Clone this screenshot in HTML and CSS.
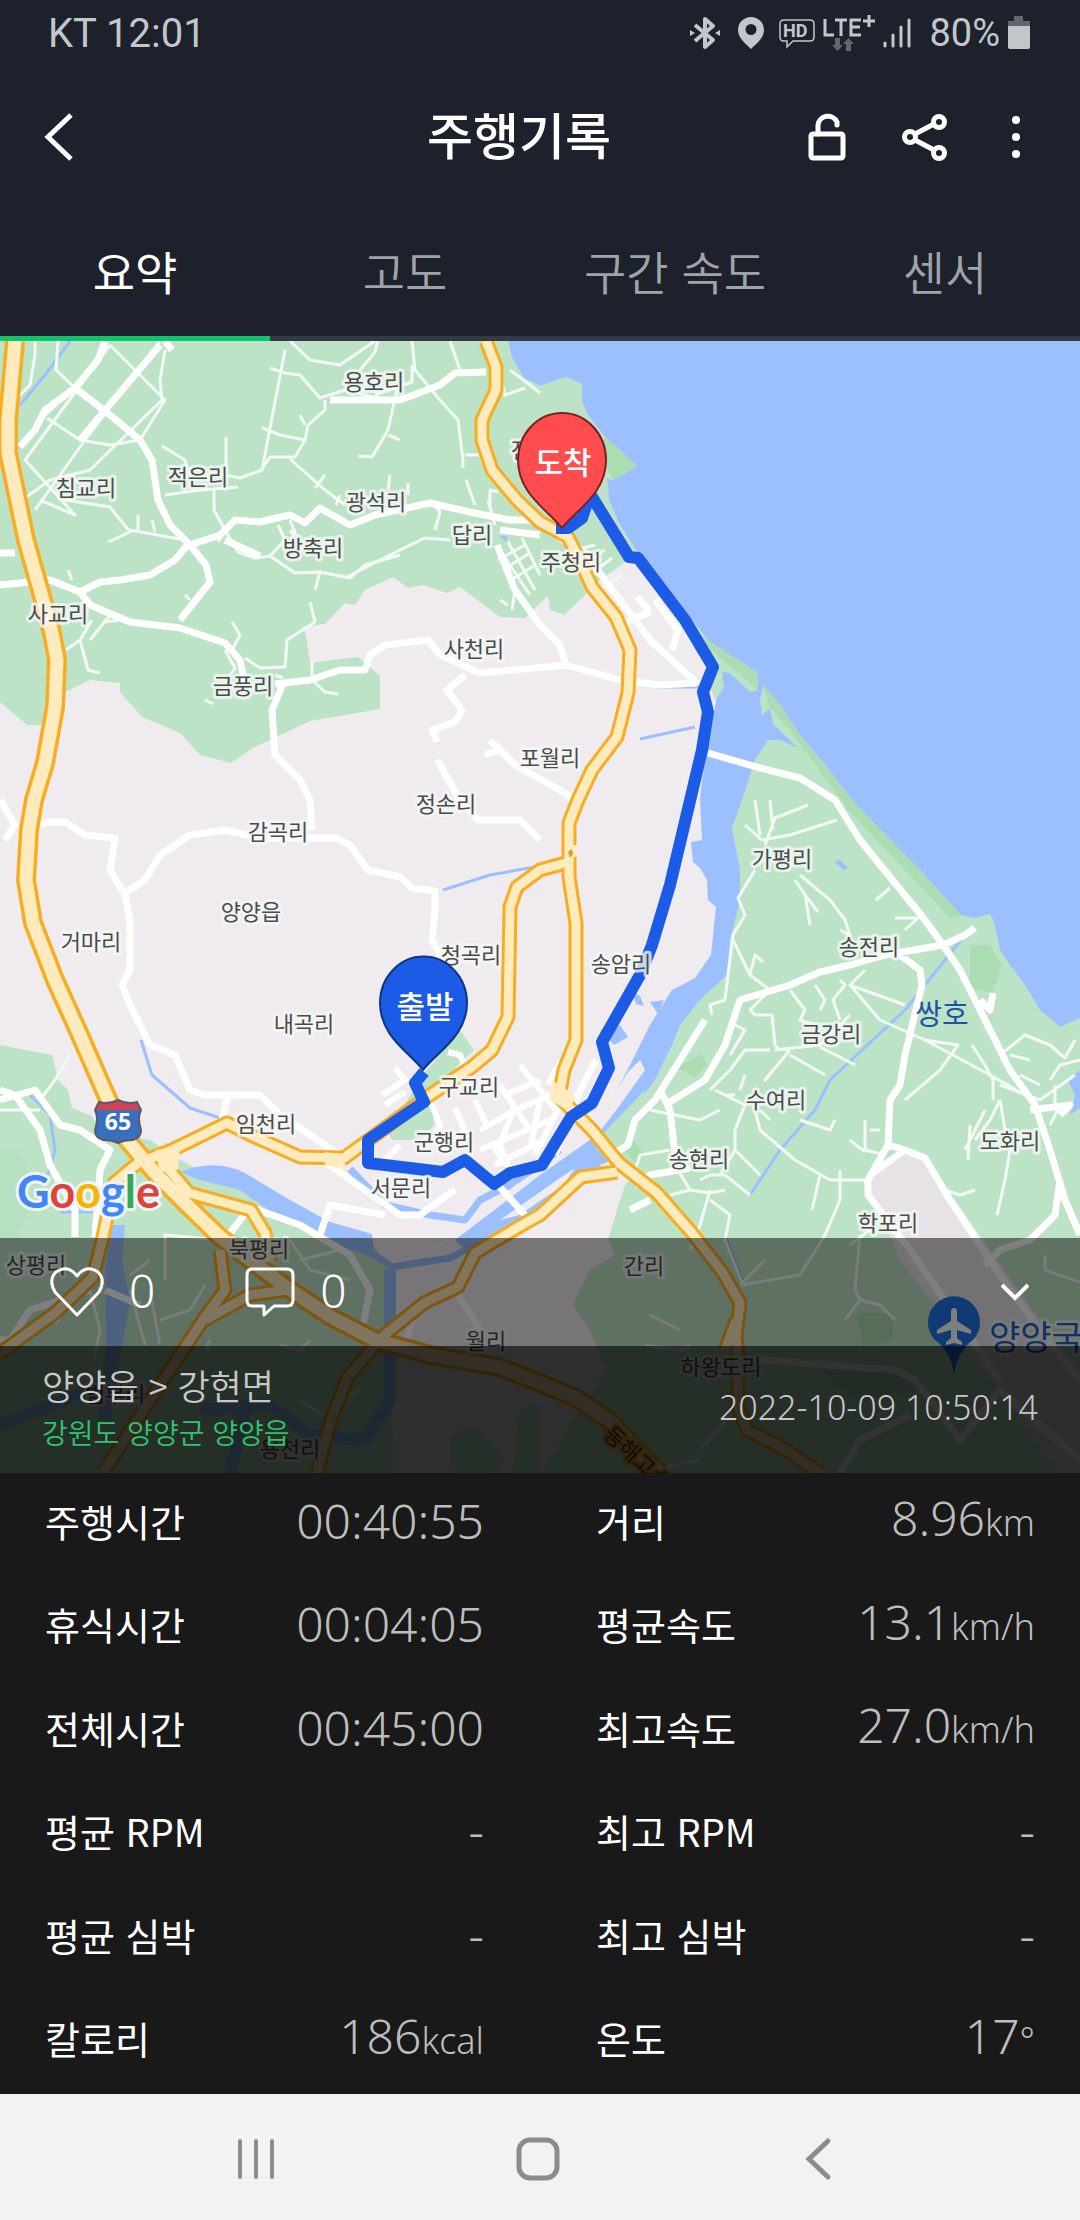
FILE: index.html
```html
<!DOCTYPE html>
<html lang="ko">
<head>
    <meta charset="UTF-8">
    <meta name="viewport" content="width=device-width, initial-scale=1.0">
    <title>주행기록</title>
    <link rel="stylesheet" href="styles.css">
</head>

<body>
    <header class="top">
        <!-- 상태 표시줄 -->
        <div class="status-bar">
            <span>KT 12:01</span>
            <div class="status-icons">
                <svg width="30" height="34" viewBox="0 0 30 34" fill="none" stroke="#c4c7c9" stroke-width="4">
                    <path d="M5 9L23 24L15 31V3L23 10L5 25" stroke-linejoin="round" />
                    <path d="M0 14l5 3-5 3zM30 14l-5 3 5 3z" fill="#c4c7c9" stroke="none" />
                </svg>
                <svg class="pin-icon" width="26" height="32" viewBox="0 0 26 32">
                    <path fill="#c4c7c9" fill-rule="evenodd" d="M13 0a13 13 0 0 1 13 13c0 8-8 14-13 19C8 27 0 21 0 13A13 13 0 0 1 13 0zM13 7a5 5 0 1 0 0 11 5 5 0 0 0 0-11z" />
                </svg>
                <svg width="36" height="32" viewBox="0 0 36 32" fill="none" stroke="#c4c7c9" stroke-width="2">
                    <path d="M5 3H31q4 0 4 4V20q0 4-4 4H14L8 30V24H5q-4 0-4-4V7q0-4 4-4z" stroke-width="1.5" />
                    <text x="4" y="20" class="hd">HD</text>
                </svg>
                <svg width="52" height="38" viewBox="0 0 52 38" fill="none" stroke="#c4c7c9" stroke-width="3">
                    <path d="M2 5V21H11M12 6H24M18 6V22M38 6H28V21H38M28 13H37M40 7H52M46 1V13" />
                    <path fill="#62676f" stroke="none" d="M12 24h5v7h3l-5.500 6L9 31h3zM23 37v-7h-3l5.500-6 5.500 6h-3v7z" />
                </svg>
                <svg width="28" height="30" viewBox="0 0 28 30" stroke="#c4c7c9" stroke-width="3" stroke-linecap="round">
                    <path d="M2 25V28M10 17V28M18 9V28M26 2V28" />
                </svg>
                <span class="battery">80%</span>
                <svg width="22" height="34" viewBox="0 0 22 34">
                    <path fill="#62676f" d="M6 0h9v5h7v6H0V5h6z" />
                    <path fill="#c4c7c9" d="M0 10h22v21q0 2-2 2H2q-2 0-2-2z" />
                </svg>
            </div>
        </div>

        <div class="title-bar">
            <button type="button" class="icon-btn back" aria-label="뒤로">
                <svg width="32" height="52" viewBox="0 0 32 52" fill="none" stroke="#fff" stroke-width="5">
                    <path d="M27 4L4 26L27 48" />
                </svg>
            </button>
            <h1>주행기록</h1>
            <div class="actions">
                <button type="button" class="icon-btn" aria-label="잠금 해제">
                    <svg width="38" height="50" viewBox="0 0 38 50" fill="none" stroke="#fff" stroke-width="5">
                        <rect x="3" y="22" width="32" height="24" rx="2" />
                        <path d="M10 22V13a10 10 0 0 1 19-3v3" stroke-linecap="round" />
                    </svg>
                </button>
                <button type="button" class="icon-btn" aria-label="공유">
                    <svg width="46" height="50" viewBox="0 0 46 50" fill="none" stroke="#fff" stroke-width="5">
                        <path d="M13 22L32 12M13 28L32 38" />
                        <circle cx="8" cy="25" r="5.500" />
                        <circle cx="37" cy="10" r="5.500" />
                        <circle cx="37" cy="41" r="5.500" />
                    </svg>
                </button>
                <button type="button" class="icon-btn" aria-label="더보기">
                    <svg width="24" height="46" viewBox="0 0 24 46" fill="#fff">
                        <circle cx="12" cy="6" r="4" />
                        <circle cx="12" cy="23" r="4" />
                        <circle cx="12" cy="40" r="4" />
                    </svg>
                </button>
            </div>
        </div>

        <nav class="tabs">
            <a href="#summary" class="tab active">요약</a>
            <a href="#altitude" class="tab">고도</a>
            <a href="#section" class="tab">구간 속도</a>
            <a href="#sensor" class="tab">센서</a>
        </nav>
    </header>

    <!-- 지도 -->
    <section class="map">
        <svg class="map-canvas" viewBox="0 341 1080 1132">
            <rect class="land" y="341" width="1080" height="1132" />

            <!-- 녹지 -->
            <path class="green" d="M0 341H508L512 358L524 378L540 386L566 377L582 384V402L588 415L605 437L637 466L613 480L607 478L609 500L620 525L638 553L600 580L590 590L564 615L550 610L548 596L540 603L525 618L500 617L460 587L447 593L423 585L408 588L393 577L365 590L355 605L345 603L325 624L302 627L306 635L310 663L358 657L380 676V709L310 721L253 748L231 763L200 755L180 733L142 717L120 692V683L90 680L65 692L60 725H27L0 702z" />
            <path class="green" d="M0 1045L52 1055L58 1080L68 1090L72 1108L92 1116L100 1130L150 1140L180 1160L210 1175L240 1175L270 1205L320 1225L370 1240L390 1270L393 1473H0z" />
            <path class="green-dark" d="M0 1150q25-10 28 30t-12 58H0z" opacity="0.3" />
            <path class="green" d="M423 1075L460 1030L474 1050L455 1068L468 1078L432 1100L434 1125L420 1140L392 1140L388 1132z" />
            <path class="green" d="M450 1440q18-25 42 2t-3 31h-32q-10-15-7-33zM520 1410q15-10 20 0V1473H512z" />

            <!-- 바다와 남대천 -->
            <path class="water" d="M508 341H1080V1120H700L640 1150L600 1165L540 1205L470 1255L455 1240L540 1175L590 1140L625 1075L650 1025L672 990L695 978L711 955L716 907L708 900L707 880L700 868L693 862L691 842L702 840L700 800L702 780L718 690L712 665L692 620L640 555L638 553L620 525L609 500L607 478L613 480L637 466L605 437L588 415L582 402V384L566 377L540 386L524 378L512 358z" />
            <path class="water" d="M600 1030l20-5 8 12-14 8zM632 992l8 4 4 10-8-2zM650 1002l14-2-6 14z" />
            <path class="land" d="M590 1120L612 1098L628 1072L640 1060L645 1070L620 1105L595 1138L575 1145z" />
            <path class="land" d="M560 1178L575 1168L560 1190L520 1215L500 1220z" />
            <path class="green" d="M597 1140L645 1090L642 1105L610 1140L596 1150z" />
            <path class="water" d="M180 1172Q215 1158 245 1173L290 1200L330 1222L372 1234L374 1256L330 1244L285 1222L240 1190L200 1180zM112 1225H125L122 1260L130 1300L118 1370L110 1420H98L106 1340L105 1270z" />
            <path class="river" d="M350 1169L385 1205L430 1215L465 1220L480 1200L510 1185L560 1150M340 1240L375 1255L392 1267L450 1258L500 1232L600 1165" />
            <path class="river wide" d="M0 1425L60 1402L110 1380M390 1270V1400L365 1440L310 1435L270 1405L200 1410M245 1410L230 1473" />
            <path class="river thin" d="M141 1040L152 1075L190 1108L220 1118M443 890L490 875L540 866M30 1095L50 1115L55 1150L48 1175M70 341L45 375L20 405M60 1212H100M300 1130L330 1150M640 739L695 727M655 687H700M545 1200L495 1245L470 1250" />

            <!-- 동쪽 해안 -->
            <path class="green" d="M640 555L655 575L692 620L712 645L757 672L758 690L750 692L730 673L722 672L724 688L715 700L708 680L714 665L700 645L670 600z" />
            <path class="green" d="M763 685L780 705L800 735L825 765L852 800L880 830L920 870L960 915L975 918L990 914L995 925L1000 950L1010 965L1025 985L1040 1010L1060 1027L1080 1018V1473H540L605 1370L590 1330L573 1305L590 1270L615 1255L608 1240L620 1200L625 1185L640 1170L600 1150L625 1120L655 1080L672 1045L680 1025L700 1000L727 975L730 940L740 900V870L732 828L742 800L755 760L768 740L780 740L798 748L773 724L770 708L762 715L760 700z" />
            <path class="green-dark" d="M763 685L780 705L800 735L852 800L920 870L962 916L950 918L905 870L850 812L790 730L770 708zM640 555L700 635L757 672L758 690L725 662L690 630zM605 437L637 466L613 480L600 450zM970 945l20 0 12 20-10 28-22-5zM677 1068l25-15 5 12-12 12zM625 1150l8-10 12 15-10 8zM857 1313h36v25l-30 10zM815 1370h80l20 20-60 10z" />
            <path class="water" d="M1080 1070L1068 1080L1075 1095L1070 1115L1080 1108zM834 862l6-2 8 8-4 2zM500 536h8l-2 6z" />
            <path class="river thin" d="M965 935L905 1010L830 1080L815 1110L780 1150L750 1195M742 1280L725 1235" />
            <path class="airport" d="M905 1150L925 1158L1040 1320L1080 1370V1473H1060L900 1260L868 1185L870 1175z" />

            <!-- 골목길 -->
            <g class="road-s">
                <path d="M35 341V355L30 385L15 400M58 341L56 370L75 388L40 420M110 345L165 400L140 440L110 445L80 440L47 418M160 341L85 440L35 510M110 345L25 460L75 515L40 500M165 350L160 380L162 400L90 470L50 480L25 498" />
                <path d="M65 500L110 507L130 532L108 542M130 530L185 540M138 515V530M152 520L155 532M162 446L185 460L190 480L215 473L240 478L262 470L285 350M226 437V475M165 495L200 490L238 487M214 490V510L225 530L218 542M225 530L238 552L255 558L270 556L295 573L320 572L315 590M270 556L285 540L278 525M290 520L300 545L290 530" />
                <path d="M270 368L285 373L300 375L320 398L345 390L385 400M325 400V410L308 425L305 440L295 457H270L260 472M305 440L280 435L262 428M300 415L305 425M397 390L388 430L372 457L358 456M388 435L400 440M412 341L415 370L440 400L458 420L463 460V468M290 341L310 360L340 365L375 341M360 370L375 352L378 341M412 365V382L375 395" />
                <path d="M290 459L325 490L345 505M315 488L325 475M336 505L340 495M345 578L380 560L400 550L425 538L450 540M320 572L350 578L365 565L400 555M388 490L390 475M408 495V483M466 480L475 505M488 500L495 525M490 505V490L498 492M430 500L440 512L435 530M450 341L460 370M500 375L505 395L525 388M510 370L530 385L540 393" />
                <path d="M465 455H480M92 620L80 640L88 670L100 673M80 640L66 650M110 615L90 640M120 620L105 622M232 622L240 635L232 650M225 650L235 668L230 675M245 658L260 668L285 667L287 640L315 622L310 602M275 675L283 678M312 680L325 692L338 694M312 662V680M205 700L213 704M68 570L72 580M185 595L190 600" />
                <path d="M497 546L530 595M508 542L535 590M522 538L540 575M498 560L525 545M503 570L530 553M508 582L535 565M515 590L512 610M500 600L508 605M570 540L600 560M575 550L595 545M580 565L605 550M590 575L612 558M600 590L622 575" />
                <path d="M755 800L760 835M770 800L773 830M745 825L762 840L790 835L837 820M765 845L775 818L808 805M755 870L738 898L745 915L733 935L728 975L725 1000L710 1005L712 1015M733 940L750 975L770 990M750 975L755 955L763 962M795 880L805 895L810 925M805 895L818 912M800 875L830 900L845 920L850 935L840 930M890 888L876 900M895 918H918L905 930" />
                <path d="M770 990L750 1010L755 1015H772L775 1045L780 1050M770 1050H745L730 1070L710 1090M735 1025L745 1030L730 1055M790 990L805 1010L800 1020L815 1025L820 1035M815 985L825 1000L820 1010M840 980L845 985L833 1000L840 1020M865 970L850 985L905 1005M850 985L880 1020M775 1050L820 1045L850 1015M790 1050L765 1080L770 1075M790 1055L825 1075M820 1047L855 1065M880 1020L925 1040L990 1075L1025 1095M925 1040L958 1045L940 1070L905 1100M972 1045L985 1065L993 1080V1100" />
                <path d="M650 1110L700 1120L720 1110M715 1090L745 1105L735 1130V1150L720 1175M735 1095H725M745 1075L740 1090M755 1110L760 1130L795 1160L830 1180H865L868 1190M760 1110L770 1120M800 1120L830 1130L835 1120M735 1150L760 1175M725 1175L750 1195M820 1175L812 1210M840 1170V1200L825 1235L800 1275L740 1285M865 1120V1150L885 1155M850 1140L865 1152M880 1130H870" />
                <path d="M675 1165L690 1190L710 1193L725 1190M710 1190L700 1225L690 1250M710 1200L730 1215L725 1240L742 1283L765 1260M670 1195L690 1190M700 1180L710 1175L725 1175M635 1170L640 1155L670 1150M860 1235L855 1290L860 1300L845 1320M860 1300L880 1305L895 1320M870 1230L850 1245M1045 1255V1270L1080 1282M1000 1100L990 1120L975 1140M1000 1100L1005 1130L1010 1150L1005 1180L997 1215M985 1110L965 1150M970 1125L968 1160M945 1190L960 1195L975 1190M1000 1085L1040 1100L1075 1075M1020 1075L1040 1085M1010 1055L1030 1060M1000 1055L1025 1035L1050 1045L1065 1058L1075 1040M1050 1080L1060 1065L1080 1060M1060 1105L1050 1125M1055 1110V1085" />
                <path d="M150 1260L130 1275M70 1055L55 1080L40 1100M0 1110H40M165 1280V1235L220 1240M205 1285L190 1310L160 1320M90 1290L100 1330L95 1355M130 1290L145 1345M150 1290L160 1345M290 1240L310 1270L350 1280M300 1260L340 1250M280 1345L300 1350L310 1340M645 1345L680 1350L690 1345M650 1315L680 1330M700 1450L740 1405M210 1340L205 1350M60 1320L20 1330M300 1400L330 1420M340 1400L360 1390M430 1250L450 1240M700 1460L650 1470L610 1430" />
            </g>

            <!-- 일반 도로 -->
            <g class="road-m">
                <path d="M105 341L98 360L75 388L45 410L35 430L20 447M75 388L110 415L140 440L152 460L158 500L170 525L190 545L206 565L210 582L180 620M190 542L175 560L150 575L120 580L100 582L80 592M0 585L50 580L80 592L90 605L130 622L180 628L225 643L240 660L245 685M190 545L220 535L235 520L260 522L290 515L305 523L320 508L350 525L375 515L430 503L470 512L510 520L540 520" />
                <path d="M160 345L80 440M165 341L172 350M330 400L400 400L440 385L455 373L486 372M225 540L260 556M500 530L540 535M497 545L515 590L540 625L560 645L566 665L620 680L660 685L697 683M275 684L310 680L340 670H365L370 655L385 645L428 640L440 655L480 673L566 665M465 675L447 690L462 710L455 722L432 730L437 742M283 684L272 710L275 755L300 780L310 800L312 830" />
                <path d="M550 530L590 560L620 600L650 640L697 683M623 623L650 612M672 650L678 630L655 600M637 597L650 612M0 553h15" />
                <path d="M437 760L460 800L478 820H520L540 840M490 740L515 765L560 790L575 800M500 750L485 755M708 753L760 768L800 778L835 800L860 840L925 920L943 945L960 970L980 1010L1010 1070L1035 1105L1050 1150L1065 1200L1080 1235" />
                <path d="M40 825L50 822H65L85 835L115 838L110 870L125 895L130 920V970L122 985L130 1005L150 1045L175 1055L190 1090L205 1095H260L280 1115L340 1155M125 893L145 880L160 855L190 835L225 830L260 838H335L350 845L368 870L400 877L412 888L435 891V910L432 940L460 990M228 1095L222 1120M0 800L15 825L5 840" />
                <path d="M0 1090L15 1095L40 1130L50 1165L75 1210V1237M0 1100L35 1090L60 1125L80 1130L110 1150L100 1170L95 1237M180 1150L165 1165M300 1155L330 1165L400 1215H420L440 1200L455 1190M385 1215L330 1205L320 1235M225 1240L250 1207L300 1225L350 1255L370 1290L360 1340M498 1185L525 1215M105 1290L140 1305M0 1340H10L30 1310L90 1290M415 1310L405 1345M455 1290L480 1330L482 1350M370 1160L395 1165" />
                <path d="M943 945L885 955L850 965L820 972L790 985L740 1000L725 1045L705 1080L665 1105M943 945L965 935L975 928M900 955L920 970L922 985L905 1055L900 1085L890 1100L888 1145L905 1150L925 1158L950 1200L1000 1275L1040 1330L1080 1380M888 1145L868 1180V1195L910 1250L1000 1380M905 1150L870 1175M1030 1110L1070 1105L1060 1115M1060 1180L1055 1215L1030 1240L1000 1250L985 1265M705 1020L655 1100L635 1120L628 1145L612 1155M660 1090L670 1110L675 1155M635 1185L650 1175L690 1168M630 1210L650 1200M740 1358L895 1370L915 1380L960 1440L1000 1390L1080 1460M840 1473L860 1440L910 1415M980 1000L990 1010L993 993" />
                <path d="M596 1060L575 1100L555 1155" />
            </g>

            <!-- 양양 시내 -->
            <g class="road-t">
                <path d="M382 1095L405 1080L395 1068M385 1105L405 1092M448 1052L460 1055L466 1068M430 1100L440 1125L434 1140M455 1108L468 1138M475 1100L488 1128M500 1085L530 1130M520 1065L556 1110M480 1150L555 1118M495 1165L540 1142M480 1130L515 1110L550 1095M505 1095L540 1080M493 1145L505 1165M515 1105L500 1145L510 1170M540 1100L530 1150M400 1145L385 1160M560 1062L548 1085M560 1105L535 1155" />
            </g>

            <!-- 국도, 고속도로 -->
            <g class="hw-edge">
                <path d="M15 341L8 420V453L26 540L41 593L52 633L57 660L55 707L45 763L34 800L29 830L26 880L33 923L55 980L79 1033L107 1097L127 1140L155 1173L189 1207L220 1237L286 1287L331 1317L375 1340L430 1355L499 1367L540 1383L574 1397L609 1420L640 1453L660 1473" />
                <path d="M486 341L496 367V390L482 420V440L492 470L517 500L540 522L568 537L583 567L592 587L616 617L630 650L628 693L617 737L592 770L578 800L569 823V877L576 923V1040L564 1070L559 1097L592 1130L619 1163L657 1193L692 1233L723 1273L740 1303L736 1337L738 1357V1407L747 1430L781 1447L820 1473" class="mid" />
                <path d="M569 862L540 870L517 887L510 907L508 1017L492 1050L472 1067L430 1095L344 1158L300 1157L255 1137L227 1123L172 1150L138 1163L114 1183L103 1237L93 1277L55 1313L0 1353M617 1172L581 1177L540 1215L527 1222L475 1253L458 1287L424 1303L382 1337L348 1377L331 1420L317 1473M165 1165L189 1193L251 1210L265 1233L270 1262M220 1250L225 1290L205 1317L150 1400L103 1473M286 1290L250 1295L205 1320M725 1350L736 1320" class="mid" />
            </g>
            <g class="hw-fill">
                <path d="M15 341L8 420V453L26 540L41 593L52 633L57 660L55 707L45 763L34 800L29 830L26 880L33 923L55 980L79 1033L107 1097L127 1140L155 1173L189 1207L220 1237L286 1287L331 1317L375 1340L430 1355L499 1367L540 1383L574 1397L609 1420L640 1453L660 1473" />
                <path d="M486 341L496 367V390L482 420V440L492 470L517 500L540 522L568 537L583 567L592 587L616 617L630 650L628 693L617 737L592 770L578 800L569 823V877L576 923V1040L564 1070L559 1097L592 1130L619 1163L657 1193L692 1233L723 1273L740 1303L736 1337L738 1357V1407L747 1430L781 1447L820 1473" class="mid" />
                <path d="M569 862L540 870L517 887L510 907L508 1017L492 1050L472 1067L430 1095L344 1158L300 1157L255 1137L227 1123L172 1150L138 1163L114 1183L103 1237L93 1277L55 1313L0 1353M617 1172L581 1177L540 1215L527 1222L475 1253L458 1287L424 1303L382 1337L348 1377L331 1420L317 1473M165 1165L189 1193L251 1210L265 1233L270 1262M220 1250L225 1290L205 1317L150 1400L103 1473M286 1290L250 1295L205 1320M725 1350L736 1320" class="mid" />
                <path d="M155 1150L180 1148L178 1170L160 1172zM325 1152L345 1155V1170L325 1165zM552 1080L575 1095L570 1112L550 1100zM565 845h12v12h-12z" class="solid" />
            </g>
            <path class="hole" d="M568 852l4-3 1 5-3 4z" />

            <!-- 주행 경로 -->
            <path class="route" d="M556 528L568 528L582 518L588 500L592 497L629 557L638 558L685 620L713 667L703 692L708 712L702 750L689 805L670 885L652 945L640 975L602 1042L609 1068L592 1103L571 1117L542 1165L510 1173L494 1184L465 1160L443 1172L368 1163V1140L424 1102L415 1083L424 1072" />

            <!-- 지명 -->
            <g class="place">
                <text x="374" y="390">용호리</text>
                <text x="198" y="485">적은리</text>
                <text x="86" y="496">침교리</text>
                <text x="376" y="510">광석리</text>
                <text x="472" y="543">답리</text>
                <text x="313" y="556">방축리</text>
                <text x="541" y="458">전진리</text>
                <text x="58" y="622">사교리</text>
                <text x="474" y="657">사천리</text>
                <text x="243" y="694">금풍리</text>
                <text x="571" y="570">주청리</text>
                <text x="550" y="766">포월리</text>
                <text x="446" y="812">정손리</text>
                <text x="278" y="840">감곡리</text>
                <text x="251" y="920">양양읍</text>
                <text x="91" y="950">거마리</text>
                <text x="471" y="963">청곡리</text>
                <text x="304" y="1032">내곡리</text>
                <text x="266" y="1132">임천리</text>
                <text x="469" y="1095">구교리</text>
                <text x="444" y="1150">군행리</text>
                <text x="401" y="1196">서문리</text>
                <text x="259" y="1257">북평리</text>
                <text x="36" y="1273">상평리</text>
                <text x="486" y="1349">월리</text>
                <text x="115" y="1402">범부리</text>
                <text x="290" y="1457">용천리</text>
                <text x="782" y="867">가평리</text>
                <text x="621" y="972">송암리</text>
                <text x="869" y="955">송전리</text>
                <text x="831" y="1042">금강리</text>
                <text x="776" y="1108">수여리</text>
                <text x="699" y="1167">송현리</text>
                <text x="1010" y="1149">도화리</text>
                <text x="888" y="1231">학포리</text>
                <text x="644" y="1274">간리</text>
                <text x="721" y="1375">하왕도리</text>
                <text x="942" y="1025" class="lake">쌍호</text>
                <text x="602" y="1436" class="road-name" transform="rotate(43 602 1436)">동해고속도로</text>
                <text x="989" y="1350" class="airport-name">양양국제공항</text>
            </g>

            <!-- 65번 고속도로 표지 -->
            <g class="shield">
                <path fill="#3a6fc0" stroke="#555b6b" stroke-width="2" d="M99 1102q9 3 19-2 10 5 19 2l4 8q-4 8 0 20 0 8-8 10-9 0-15 3-6-3-15-3-8-2-8-10 4-12 0-20z" />
                <path fill="#d14352" d="M100 1103q9 3 18-2 9 5 18 2l4 7H96z" />
                <text x="118" y="1130">65</text>
            </g>

            <!-- 공항 핀 -->
            <path fill="#1f74e8" d="M954 1374Q950 1350 935 1340A26 26 0 1 1 973 1340Q958 1350 954 1374z" />
            <path fill="#fff" d="M954 1308q3 0 3 4v9l14 9v4l-14-4v8l5 4v3l-8-2-8 2v-3l5-4v-8l-14 4v-4l14-9v-9q0-4 3-4z" />

            <text class="google" x="17" y="1208"><tspan fill="#4285f4">G</tspan><tspan fill="#db4437">o</tspan><tspan fill="#f4b400">o</tspan><tspan fill="#4285f4">g</tspan><tspan fill="#34a853">l</tspan><tspan fill="#db4437">e</tspan></text>

            <!-- 출발 / 도착 -->
            <g class="marker">
                <path fill="#ff4d4f" stroke="#7d2020" d="M562 528C548 510 518 494 518 460A44 47 0 0 1 606 460C606 494 576 510 562 528z" />
                <text x="563" y="474">도착</text>
                <path fill="#1c5be6" stroke="#10357f" d="M423 1070C409 1052 380 1036 380 1003A43 46 0 0 1 467 1003C467 1036 437 1052 423 1070z" />
                <text x="425" y="1018">출발</text>
            </g>
        </svg>

        <div class="map-overlay">
            <div class="social">
                <button type="button" class="count-btn" aria-label="좋아요">
                    <svg width="54" height="50" viewBox="0 0 54 50" fill="none" stroke="#fff" stroke-width="3">
                        <path d="M27 48L5 25Q-2 13 6 5Q18-3 27 9Q36-3 48 5Q56 13 49 25z" stroke-linejoin="round" />
                    </svg>
                    <span>0</span>
                </button>
                <button type="button" class="count-btn" aria-label="댓글">
                    <svg width="50" height="50" viewBox="0 0 50 50" fill="none" stroke="#fff" stroke-width="3">
                        <path d="M7 2H42q6 0 6 6V33q0 6-6 6H29L19 48V39H7q-5 0-5-6V8q0-6 5-6z" stroke-linejoin="round" />
                    </svg>
                    <span>0</span>
                </button>
                <button type="button" class="icon-btn fold" aria-label="접기">
                    <svg width="30" height="20" viewBox="0 0 30 20" fill="none" stroke="#fff" stroke-width="4">
                        <path d="M2 3L15 16L28 3" />
                    </svg>
                </button>
            </div>
            <div class="ride-info">
                <div>
                    <p class="ride-name">양양읍 &gt; 강현면</p>
                    <p class="ride-place">강원도 양양군 양양읍</p>
                </div>
                <time datetime="2022-10-09T10:50:14">2022-10-09 10:50:14</time>
            </div>
        </div>
    </section>

    <!-- 기록 -->
    <dl class="stats" id="summary">
        <div><dt>주행시간</dt><dd>00:40:55</dd></div>
        <div><dt>거리</dt><dd>8.96<small>km</small></dd></div>
        <div><dt>휴식시간</dt><dd>00:04:05</dd></div>
        <div><dt>평균속도</dt><dd>13.1<small>km/h</small></dd></div>
        <div><dt>전체시간</dt><dd>00:45:00</dd></div>
        <div><dt>최고속도</dt><dd>27.0<small>km/h</small></dd></div>
        <div><dt>평균 RPM</dt><dd>-</dd></div>
        <div><dt>최고 RPM</dt><dd>-</dd></div>
        <div><dt>평균 심박</dt><dd>-</dd></div>
        <div><dt>최고 심박</dt><dd>-</dd></div>
        <div><dt>칼로리</dt><dd>186<small>kcal</small></dd></div>
        <div><dt>온도</dt><dd>17<small>°</small></dd></div>
    </dl>

    <nav class="system-nav">
        <button type="button" class="icon-btn" aria-label="최근 앱">
            <svg width="44" height="44" viewBox="0 0 44 44" fill="none" stroke="#8c8c8c" stroke-width="4" stroke-linecap="round">
                <path d="M6 4V40M22 4V40M38 4V40" />
            </svg>
        </button>
        <button type="button" class="icon-btn" aria-label="홈">
            <svg width="44" height="44" viewBox="0 0 44 44" fill="none" stroke="#8c8c8c" stroke-width="5">
                <rect x="3" y="3" width="38" height="38" rx="11" />
            </svg>
        </button>
        <button type="button" class="icon-btn" aria-label="뒤로 가기">
            <svg width="44" height="44" viewBox="0 0 44 44" fill="none" stroke="#8c8c8c" stroke-width="5" stroke-linecap="round">
                <path d="M30 4L11 22L30 40" />
            </svg>
        </button>
    </nav>
</body>
</html>
```
FILE: styles.css
```css
* {
    box-sizing: border-box;
}

body {
    margin: 0;
    min-height: 100vh;
    display: flex;
    flex-direction: column;
    background-color: #191919;
    color: #fff;
    font-family: "Noto Sans CJK KR", sans-serif;
}

button {
    padding: 0;
    border: none;
    background: none;
    color: inherit;
    font: inherit;
    cursor: pointer;
}

svg {
    display: block;
}

.icon-btn {
    display: flex;
}

/* 상단 */
.top {
    background-color: #1c212b;
}

.status-bar {
    height: 66px;
    padding: 0 50px 0 48px;
    display: flex;
    justify-content: space-between;
    align-items: center;
    color: #c4c7c9;
    font-family: Roboto, sans-serif;
    font-size: 40px;
}

.status-icons {
    display: flex;
    align-items: center;
    gap: 8px;
}

.pin-icon {
    margin: 0 7px 0 10px;
}

.battery {
    margin-left: 10px;
    font-size: 38px;
}

.hd {
    font-size: 18px;
    font-weight: 700;
    fill: #c4c7c9;
    stroke: none;
}

.title-bar {
    height: 142px;
    padding: 0 52px 0 10px;
    display: grid;
    grid-template-columns: 1fr auto 1fr;
    align-items: center;
}

.title-bar .back {
    padding-left: 34px;
}

.title-bar h1 {
    margin: 0;
    padding-bottom: 8px;
    font-size: 50px;
    font-weight: 500;
    line-height: 60px;
}

.actions {
    display: flex;
    justify-content: flex-end;
    align-items: center;
    gap: 56px;
}

.tabs {
    display: flex;
    height: 133px;
}

.tab {
    flex: 1;
    display: flex;
    justify-content: center;
    align-items: center;
    padding-bottom: 4px;
    border-bottom: 5px solid #333946;
    color: #a0a3a8;
    font-size: 46px;
    font-weight: 350;
    text-decoration: none;
}

.tab.active {
    border-color: #10c46c;
    color: #fff;
    font-weight: 400;
}

/* 지도 */
.map {
    position: relative;
}

.map-canvas {
    width: 100%;
    height: auto;
}

.land { fill: #efebee; }
.green { fill: #bce3c6; }
.green-dark { fill: #acdcb2; }
.water { fill: #9cc0ff; }
.airport { fill: #e7e2e6; }
.hole { fill: #d99a2a; }

.river,
.road-s,
.road-m,
.road-t,
.hw-edge,
.hw-fill,
.route {
    fill: none;
    stroke-linejoin: round;
}

.river {
    stroke: #9cc0ff;
    stroke-width: 7;
}

.river.thin {
    stroke-width: 3;
}

.river.wide {
    stroke-width: 12;
}

.road-s {
    stroke: #f3faf5;
    stroke-width: 3;
}

.road-m {
    stroke: #fff;
    stroke-width: 7;
}

.road-t {
    stroke: #fff;
    stroke-width: 6;
}

.hw-edge {
    stroke: #f8ad20;
    stroke-width: 20;
}

.hw-edge .mid {
    stroke-width: 15;
}

.hw-fill {
    stroke: #ffebbd;
    stroke-width: 13;
}

.hw-fill .mid {
    stroke-width: 9;
}

.hw-fill .solid {
    fill: #ffebbd;
    stroke: none;
}

.route {
    stroke: #1c5be6;
    stroke-width: 12;
}

.place text {
    fill: #4b4b4b;
    stroke: #f5f8f6;
    stroke-opacity: 0.8;
    stroke-width: 6px;
    stroke-linejoin: round;
    paint-order: stroke;
    font-size: 22px;
    text-anchor: middle;
}

.place .lake {
    fill: #1b55a8;
    stroke: none;
    font-size: 29px;
}

.place .road-name {
    fill: #5a3608;
    stroke: #f8ad20;
    text-anchor: start;
}

.place .airport-name {
    fill: #1f62c4;
    font-size: 34px;
    text-anchor: start;
}

.shield text {
    fill: #fff;
    font-family: "Open Sans", sans-serif;
    font-size: 23px;
    font-weight: 700;
    text-anchor: middle;
}

.google {
    stroke: #eef4fb;
    stroke-width: 6px;
    stroke-linejoin: round;
    paint-order: stroke;
    font-family: Lato, sans-serif;
    font-size: 45px;
    font-weight: 700;
}

.marker path {
    stroke-width: 2px;
}

.marker text {
    fill: #fff;
    font-size: 31px;
    font-weight: 500;
    text-anchor: middle;
}

.map-overlay {
    position: absolute;
    left: 0;
    right: 0;
    bottom: 0;
}

.social {
    height: 108px;
    padding: 0 50px;
    display: flex;
    align-items: center;
    gap: 90px;
    background-color: rgba(0, 0, 0, 0.5);
}

.count-btn {
    display: flex;
    align-items: center;
    gap: 25px;
    font-family: "Noto Sans", sans-serif;
    font-size: 46px;
    font-weight: 300;
    line-height: 60px;
}

.count-btn span {
    padding-bottom: 4px;
}

.fold {
    margin-left: auto;
}

.ride-info {
    height: 127px;
    padding: 0 42px 6px;
    display: flex;
    justify-content: space-between;
    align-items: center;
    background-color: rgba(0, 0, 0, 0.8);
    color: #c8c8c8;
    font-weight: 350;
}

.ride-info p {
    margin: 0;
}

.ride-name {
    font-size: 35px;
    line-height: 50px;
}

.ride-info .ride-place {
    color: #2fc46f;
    font-size: 28px;
    line-height: 44px;
}

.ride-info time {
    font-family: "Noto Sans", sans-serif;
    font-size: 34px;
    font-weight: 300;
}

/* 기록 */
.stats {
    flex: 1;
    margin: 0;
    padding: 0 45px;
    display: grid;
    grid-template-columns: 1fr 1fr;
    column-gap: 112px;
}

.stats div {
    min-height: 96px;
    padding-bottom: 8px;
    display: flex;
    justify-content: space-between;
    align-items: center;
}

.stats dt {
    font-size: 38px;
    line-height: 60px;
}

.stats dd {
    margin: 0;
    color: #bebebe;
    font-family: "Noto Sans", sans-serif;
    font-size: 48px;
    font-weight: 300;
    line-height: 60px;
}

.stats small {
    font-size: 36px;
}

/* 하단 내비게이션 */
.system-nav {
    height: 126px;
    padding: 4px 238px 0 234px;
    display: flex;
    justify-content: space-between;
    align-items: center;
    background-color: #f2f2f2;
}
```
